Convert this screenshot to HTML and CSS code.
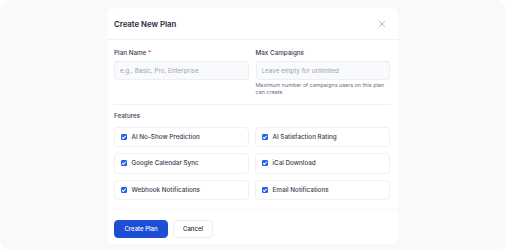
FILE: index.html
```html
<!DOCTYPE html>
<html lang="en">
<head>
    <meta charset="UTF-8">
    <meta name="viewport" content="width=device-width, initial-scale=1.0">
    <title>Create New Plan</title>
    <link rel="stylesheet" href="styles.css">
</head>
<body>
    <div class="backdrop">
        <div class="modal">
            <div class="modal-header">
                <h2>Create New Plan</h2>
                <button class="close" aria-label="Close">
                    <svg width="6" height="6" viewBox="0 0 6 6"><path d="M0.5 0.5L5.5 5.5M5.5 0.5L0.5 5.5" stroke="#9ca3af" stroke-width="0.8" stroke-linecap="round"/></svg>
                </button>
            </div>
            <div class="modal-body">
                <div class="fields">
                    <div class="field">
                        <label for="plan_name">Plan Name <span class="req">*</span></label>
                        <input type="text" id="plan_name" placeholder="e.g., Basic, Pro, Enterprise">
                    </div>
                    <div class="field">
                        <label for="max_campaigns">Max Campaigns</label>
                        <input type="text" id="max_campaigns" placeholder="Leave empty for unlimited">
                        <p class="hint">Maximum number of campaigns users on this plan can create</p>
                    </div>
                </div>
                <div class="features">
                    <h3>Features</h3>
                    <div class="feature-grid">
                        <label class="feature"><span class="check"></span>AI No-Show Prediction</label>
                        <label class="feature"><span class="check"></span>AI Satisfaction Rating</label>
                        <label class="feature"><span class="check"></span>Google Calendar Sync</label>
                        <label class="feature"><span class="check"></span>iCal Download</label>
                        <label class="feature"><span class="check"></span>Webhook Notifications</label>
                        <label class="feature"><span class="check"></span>Email Notifications</label>
                    </div>
                </div>
            </div>
            <div class="modal-footer">
                <button class="btn primary">Create Plan</button>
                <button class="btn">Cancel</button>
            </div>
        </div>
    </div>
</body>
</html>
```
FILE: styles.css
```css
body {
    margin: 0;
    padding: 0;
    background-color: #fff;
    font-family: Inter, "Noto Sans", sans-serif;
    color: #1f2937;
}
.backdrop {
    height: 250px;
    background-color: #f8f9fb;
    border-radius: 11px;
    padding-top: 8px;
    box-sizing: border-box;
}
.modal {
    width: 290px;
    margin-left: 108px;
    background-color: #fff;
    border-radius: 6px;
}
.modal-header {
    display: flex;
    align-items: center;
    justify-content: space-between;
    height: 31px;
    padding: 0 13px 0 6px;
    border-bottom: 1px solid #f1f2f4;
}
.modal-header h2 {
    margin: 0;
    font-size: 7.8px;
    font-weight: 600;
    color: #1f2937;
}
.close {
    border: none;
    background: none;
    padding: 0;
    display: flex;
}
.modal-body {
    padding: 9px 8px 0 6px;
}
.fields {
    display: grid;
    grid-template-columns: 1fr 1fr;
    gap: 7px;
    padding-bottom: 8px;
    border-bottom: 1px solid #f1f2f4;
}
.field label {
    display: block;
    font-size: 6.3px;
    line-height: 8px;
    font-weight: 500;
    color: #374151;
    margin-bottom: 4px;
}
.req {
    color: #ef4444;
}
.field input {
    display: block;
    width: 100%;
    height: 19px;
    box-sizing: border-box;
    border: 1px solid #eceef1;
    border-radius: 3px;
    background-color: #f9fafb;
    padding: 0 5px;
    font-family: inherit;
    font-size: 6.3px;
    color: #374151;
}
.field input::placeholder {
    color: #9ca3af;
}
.hint {
    margin: 2px 0 0 0;
    font-size: 5.4px;
    line-height: 7px;
    color: #6b7280;
}
.features {
    padding: 7px 0 9px 0;
}
.features h3 {
    margin: 0 0 6.5px 0;
    font-size: 6.3px;
    line-height: 8px;
    font-weight: 500;
    color: #374151;
}
.feature-grid {
    display: grid;
    grid-template-columns: 1fr 1fr;
    gap: 6px;
}
.feature {
    display: flex;
    align-items: center;
    gap: 4.5px;
    height: 20.5px;
    box-sizing: border-box;
    padding: 0 6px;
    border: 1px solid #f0f1f3;
    border-radius: 4px;
    font-size: 6.3px;
    font-weight: 500;
    color: #374151;
}
.check {
    width: 6px;
    height: 6px;
    border-radius: 1.2px;
    background-color: #2563eb;
    position: relative;
    flex-shrink: 0;
}
.check::after {
    content: "";
    position: absolute;
    left: 2px;
    top: 0.8px;
    width: 1.3px;
    height: 2.8px;
    border: solid #fff;
    border-width: 0 0.9px 0.9px 0;
    transform: rotate(45deg);
}
.modal-footer {
    display: flex;
    gap: 5px;
    padding: 9.5px 6px 6px 6px;
    border-top: 1px solid #f6f7f8;
}
.btn {
    height: 18.5px;
    width: 40px;
    padding: 0;
    border: 1px solid #eceef1;
    border-radius: 4px;
    background-color: #fff;
    font-family: inherit;
    font-size: 6px;
    font-weight: 500;
    color: #1f2937;
}
.btn.primary {
    width: 54px;
    background-color: #1d4ed8;
    border-color: #1d4ed8;
    color: #fff;
}
```
